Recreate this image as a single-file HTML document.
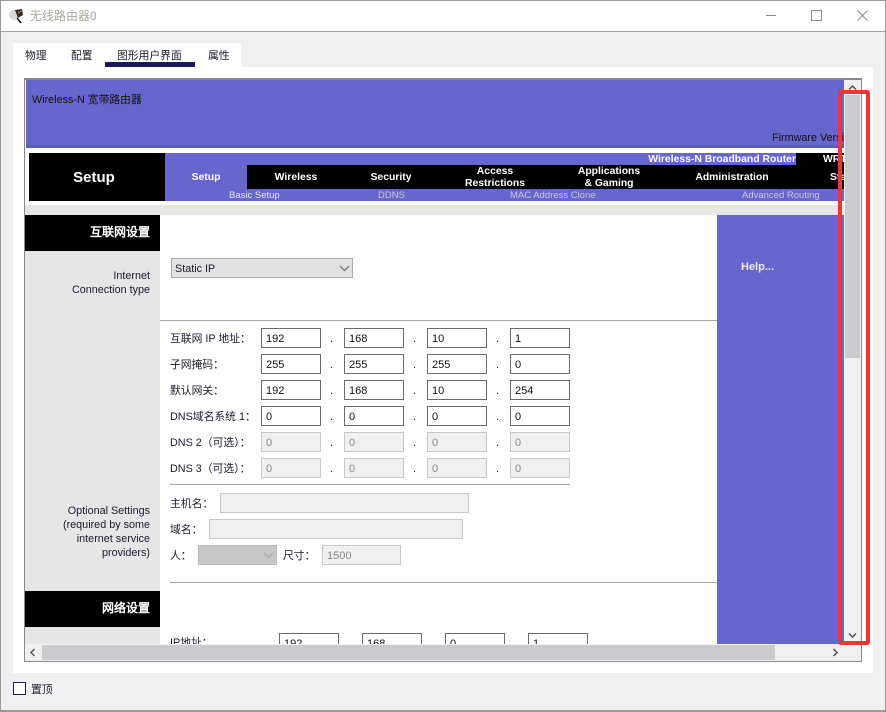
<!DOCTYPE html>
<html lang="zh"><head><meta charset="utf-8"><title>无线路由器0</title>
<style>
html,body{margin:0;padding:0}
body{width:886px;height:712px;position:relative;overflow:hidden;background:#f0f0f0;font:10.8px/14px "Liberation Sans","WenQuanYi Zen Hei","Noto Sans CJK SC",sans-serif;color:#1a1a2a}
div,span{position:absolute;box-sizing:border-box;white-space:nowrap}
.t{line-height:14px;transform:translateY(1px)}
.r{text-align:right}
.c{text-align:center}
.w{color:#fff;font-weight:bold;font-family:"Liberation Sans","WenQuanYi Zen Hei",sans-serif;font-size:10.4px;line-height:12px}
.s{color:#c8c8d8;font-size:9.5px;line-height:12px;top:189px}
.i{width:60px;height:20px;border:1px solid #6e6a68;background:#fff;padding:3px 0 0 4px;font-size:11px;line-height:14px;color:#111}
.d{border:1px solid #c8c8c8;background:#f0f0f0;color:#8a8a8a}
.dot{width:3px;height:14px;font-size:11px;line-height:14px}
.b{background:#000}
.p{background:#6666cc}
</style></head><body>
<div style="left:0;top:0;width:886px;height:712px;border:1px solid #9a9a9a;border-bottom-width:2px"></div>
<div style="left:1px;top:1px;width:884px;height:30px;background:#fff"></div>
<div style="left:1px;top:31px;width:884px;height:1px;background:#a0a0a8"></div>
<svg style="position:absolute;left:8px;top:7px" width="18" height="18" viewBox="0 0 18 18"><circle cx="6" cy="8" r="5" fill="#d9d9d9"/><path d="M7 3l7-1 1 6-5 3z" fill="#2a2a30"/><path d="M10 4l2 1-1 2zM13 3l1 2-2 0z" fill="#e09a3a"/><path d="M9 11l4 5" stroke="#111" stroke-width="1.5"/></svg>
<div class="t" style="left:30px;top:9px;font-size:12px;color:#a8a8a0;transform:none">无线路由器0</div>
<div style="left:766px;top:15px;width:10px;height:1px;background:#8a8a8a"></div>
<div style="left:811px;top:10px;width:11px;height:11px;border:1px solid #8a8a8a"></div>
<svg style="position:absolute;left:857px;top:10px" width="11" height="11" viewBox="0 0 11 11"><path d="M.5.5l10 10M10.500.5l-10 10" stroke="#8a8a8a" fill="none"/></svg>

<div style="left:13px;top:43px;width:228px;height:24px;background:#fff"></div>
<div style="left:13px;top:67px;width:860px;height:606px;background:#fff"></div>
<div class="t" style="left:25px;top:48px">物理</div>
<div class="t" style="left:71px;top:48px">配置</div>
<div class="t" style="left:117px;top:48px">图形用户界面</div>
<div class="t" style="left:208px;top:48px">属性</div>
<div style="left:105px;top:62px;width:90px;height:5px;background:#1a1a5a"></div>

<div style="left:24px;top:78px;width:838px;height:584px;border:1px solid #888890;border-top-width:2px;background:#fff"></div>
<div class="p" style="left:26px;top:80px;width:818px;height:65px"></div>
<div style="left:26px;top:145px;width:818px;height:3px;background:#5860b0"></div>
<div class="t" style="left:32px;top:92px;color:#111">Wireless-N 宽带路由器</div>
<div class="t" style="left:772px;top:130px;width:72px;overflow:hidden;color:#111">Firmware Version</div>

<div class="b" style="left:29px;top:153px;width:136px;height:48px"></div>
<div class="w c" style="left:29px;top:170px;width:130px;font-size:15px;line-height:16px">Setup</div>
<div class="p" style="left:165px;top:153px;width:679px;height:48px"></div>
<div class="b" style="left:796px;top:153px;width:48px;height:12px"></div>
<div class="b" style="left:247px;top:165px;width:597px;height:24px"></div>
<div class="w r" style="right:90px;top:154px">Wireless-N Broadband Router</div>
<div class="w" style="left:823px;top:154px;width:21px;overflow:hidden">WRT300N</div>
<div class="w c" style="left:165px;top:172px;width:82px">Setup</div>
<div class="w c" style="left:255px;top:172px;width:82px">Wireless</div>
<div class="w c" style="left:350px;top:172px;width:82px">Security</div>
<div class="w c" style="left:445px;top:166px;width:100px">Access<br>Restrictions</div>
<div class="w c" style="left:559px;top:166px;width:100px">Applications<br>&amp; Gaming</div>
<div class="w c" style="left:672px;top:172px;width:120px">Administration</div>
<div class="w" style="left:830px;top:172px;width:14px;overflow:hidden">Status</div>
<div class="s" style="left:229px;top:190px;color:#e8e8f4">Basic Setup</div>
<div class="s" style="left:378px;top:190px">DDNS</div>
<div class="s" style="left:510px;top:190px">MAC Address Clone</div>
<div class="s" style="left:742px;top:190px;width:80px;overflow:hidden">Advanced Routing</div>

<div style="left:25px;top:205px;width:819px;height:10px;background:#e6e6e6"></div>
<div style="left:25px;top:215px;width:135px;height:429px;background:#e6e6e6"></div>
<div class="b" style="left:25px;top:215px;width:135px;height:36px"></div>
<div class="w r" style="left:25px;top:225px;width:125px;font-size:12px;line-height:14px">互联网设置</div>
<div class="t r" style="left:25px;top:268px;width:125px">Internet<br>Connection type</div>
<div class="p" style="left:717px;top:215px;width:127px;height:429px"></div>
<div class="w" style="left:741px;top:261px;font-size:11px;color:#eeeef8">Help...</div>

<div style="left:171px;top:258px;width:182px;height:20px;border:1px solid #aaa;background:#e2e2e2;padding:3px 0 0 3px">Static IP</div>
<svg style="position:absolute;left:339px;top:265px" width="11" height="7" viewBox="0 0 11 7"><path d="M1 1l4.500 4.500L10 1" fill="none" stroke="#666" stroke-width="1.200"/></svg>
<div style="left:160px;top:320px;width:557px;height:1px;background:#a8a8a8"></div>

<div class="t" style="left:170px;top:331px">互联网 IP 地址：</div>
<div class="i" style="left:261px;top:328px">192</div><div class="dot" style="left:330px;top:332px">.</div>
<div class="i" style="left:344px;top:328px">168</div><div class="dot" style="left:413px;top:332px">.</div>
<div class="i" style="left:427px;top:328px">10</div><div class="dot" style="left:496px;top:332px">.</div>
<div class="i" style="left:510px;top:328px">1</div>

<div class="t" style="left:170px;top:357px">子网掩码：</div>
<div class="i" style="left:261px;top:354px">255</div><div class="dot" style="left:330px;top:358px">.</div>
<div class="i" style="left:344px;top:354px">255</div><div class="dot" style="left:413px;top:358px">.</div>
<div class="i" style="left:427px;top:354px">255</div><div class="dot" style="left:496px;top:358px">.</div>
<div class="i" style="left:510px;top:354px">0</div>

<div class="t" style="left:170px;top:383px">默认网关：</div>
<div class="i" style="left:261px;top:380px">192</div><div class="dot" style="left:330px;top:384px">.</div>
<div class="i" style="left:344px;top:380px">168</div><div class="dot" style="left:413px;top:384px">.</div>
<div class="i" style="left:427px;top:380px">10</div><div class="dot" style="left:496px;top:384px">.</div>
<div class="i" style="left:510px;top:380px">254</div>

<div class="t" style="left:170px;top:409px">DNS域名系统 1：</div>
<div class="i" style="left:261px;top:406px">0</div><div class="dot" style="left:330px;top:410px">.</div>
<div class="i" style="left:344px;top:406px">0</div><div class="dot" style="left:413px;top:410px">.</div>
<div class="i" style="left:427px;top:406px">0</div><div class="dot" style="left:496px;top:410px">.</div>
<div class="i" style="left:510px;top:406px">0</div>

<div class="t" style="left:170px;top:435px">DNS 2（可选）：</div>
<div class="i d" style="left:261px;top:432px">0</div><div class="dot" style="left:330px;top:436px">.</div>
<div class="i d" style="left:344px;top:432px">0</div><div class="dot" style="left:413px;top:436px">.</div>
<div class="i d" style="left:427px;top:432px">0</div><div class="dot" style="left:496px;top:436px">.</div>
<div class="i d" style="left:510px;top:432px">0</div>

<div class="t" style="left:170px;top:461px">DNS 3（可选）：</div>
<div class="i d" style="left:261px;top:458px">0</div><div class="dot" style="left:330px;top:462px">.</div>
<div class="i d" style="left:344px;top:458px">0</div><div class="dot" style="left:413px;top:462px">.</div>
<div class="i d" style="left:427px;top:458px">0</div><div class="dot" style="left:496px;top:462px">.</div>
<div class="i d" style="left:510px;top:458px">0</div>

<div style="left:170px;top:484px;width:400px;height:1px;background:#a8a8a8"></div>

<div class="t r" style="left:25px;top:503px;width:125px">Optional Settings<br>(required by some<br>internet service<br>providers)</div>
<div class="t" style="left:170px;top:496px">主机名：</div>
<div class="i d" style="left:220px;top:493px;width:249px"></div>
<div class="t" style="left:170px;top:522px">域名：</div>
<div class="i d" style="left:209px;top:519px;width:254px"></div>
<div class="t" style="left:170px;top:548px">人：</div>
<div style="left:198px;top:545px;width:79px;height:20px;background:#c8c8c8;border:1px dotted #aaa"></div>
<svg style="position:absolute;left:263px;top:552px" width="11" height="7" viewBox="0 0 11 7"><path d="M1 1l4.500 4.500L10 1" fill="none" stroke="#aaa" stroke-width="1"/></svg>
<div class="t" style="left:283px;top:548px">尺寸：</div>
<div class="i d" style="left:322px;top:545px;width:79px">1500</div>
<div style="left:170px;top:582px;width:547px;height:1px;background:#a8a8a8"></div>

<div class="b" style="left:25px;top:591px;width:135px;height:36px"></div>
<div class="w r" style="left:25px;top:601px;width:125px;font-size:12px;line-height:14px">网络设置</div>

<div style="left:160px;top:630px;width:557px;height:14px;overflow:hidden">
<div class="t" style="left:10px;top:5px">IP地址：</div>
<div class="i" style="left:119px;top:3px">192</div>
<div class="i" style="left:202px;top:3px">168</div>
<div class="i" style="left:285px;top:3px">0</div>
<div class="i" style="left:368px;top:3px">1</div>
</div>

<div style="left:844px;top:80px;width:17px;height:564px;background:#f0f0f0"></div>
<div style="left:845px;top:95px;width:15px;height:263px;background:#cbcbcd"></div>
<svg style="position:absolute;left:848px;top:84px" width="9" height="7" viewBox="0 0 9 7"><path d="M1 5.500l3.500-3.500L8 5.500" fill="none" stroke="#555" stroke-width="1.500"/></svg>
<svg style="position:absolute;left:848px;top:632px" width="9" height="7" viewBox="0 0 9 7"><path d="M1 1.500l3.500 3.500L8 1.500" fill="none" stroke="#555" stroke-width="1.500"/></svg>

<div style="left:25px;top:644px;width:836px;height:17px;background:#f0f0f0"></div>
<div style="left:42px;top:645px;width:733px;height:15px;background:#cbcbcd"></div>
<svg style="position:absolute;left:29px;top:648px" width="7" height="9" viewBox="0 0 7 9"><path d="M5.500 1L2 4.500 5.500 8" fill="none" stroke="#555" stroke-width="1.500"/></svg>
<svg style="position:absolute;left:832px;top:648px" width="7" height="9" viewBox="0 0 7 9"><path d="M1.500 1L5 4.500 1.500 8" fill="none" stroke="#555" stroke-width="1.500"/></svg>

<div style="left:838px;top:90px;width:32px;height:555px;border:4px solid #f33434;border-radius:3px"></div>

<div style="left:13px;top:682px;width:13px;height:13px;border:1px solid #1a2050;background:#fff"></div>
<div class="t" style="left:31px;top:682px">置顶</div>
</body></html>
